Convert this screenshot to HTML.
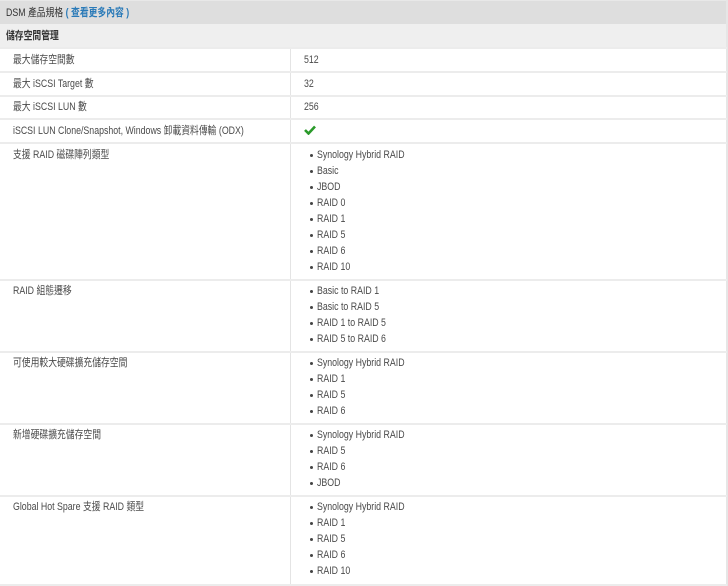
<!DOCTYPE html>
<html><head><meta charset="utf-8"><style>
*{margin:0;padding:0;box-sizing:border-box}
body{width:728px;height:586px;background:#fff;font-family:"Liberation Sans","Noto Sans CJK TC",sans-serif;font-size:11px;color:#4a4a4a;position:relative;overflow:hidden}
.a{position:absolute}
.hd{left:0;top:0;width:727px;height:24px;background:#dedede;border-top:1px solid #e8e8e8}
.sec{left:0;top:24px;width:727px;height:23px;background:#efefef}
.ln{position:absolute;left:0;width:727px;height:2px;background:#ececec}
.vl{position:absolute;left:290px;width:1px;background:#e4e4e4}
.t,.li{position:absolute;white-space:nowrap;line-height:14px;transform:scaleX(0.8);transform-origin:0 0}
.li{left:317px}
.d{position:absolute;left:310px;width:3px;height:3px;border-radius:50%;background:#444}
.rb{position:absolute;left:726px;top:0;width:2px;height:586px;background:#e6e6e6}
</style></head><body>
<div class="a hd"></div>
<div class="t" style="left:6px;top:6px;color:#333">DSM 產品規格 <b style="color:#2a7ab8">( 查看更多內容 )</b></div>
<div class="a sec"></div>
<div class="t" style="left:6px;top:29px;color:#333;font-weight:bold">儲存空間管理</div>
<div class="rb"></div>
<div class="vl" style="top:48px;height:537px"></div>
<div class="ln" style="top:47px"></div>
<div class="ln" style="top:71px"></div>
<div class="ln" style="top:95px"></div>
<div class="ln" style="top:118px"></div>
<div class="ln" style="top:142px"></div>
<div class="ln" style="top:279px"></div>
<div class="ln" style="top:351px"></div>
<div class="ln" style="top:423px"></div>
<div class="ln" style="top:495px"></div>
<div class="ln" style="top:584px"></div>

<div class="t" style="left:13px;top:53px">最大儲存空間數</div><div class="t" style="left:304px;top:53px">512</div>
<div class="t" style="left:13px;top:77px">最大 iSCSI Target 數</div><div class="t" style="left:304px;top:77px">32</div>
<div class="t" style="left:13px;top:100px">最大 iSCSI LUN 數</div><div class="t" style="left:304px;top:100px">256</div>
<div class="t" style="left:13px;top:124px">iSCSI LUN Clone/Snapshot, Windows 卸載資料傳輸 (ODX)</div>
<svg class="a" style="left:304px;top:125px" width="12" height="10" viewBox="0 0 12 10"><path d="M1 5 L4.5 8.5 L11 1.5" stroke="#2a9a2a" stroke-width="2.6" fill="none"/></svg>

<div class="t" style="left:13px;top:148px">支援 RAID 磁碟陣列類型</div>
<div class="d" style="top:154px"></div><div class="li" style="top:148px">Synology Hybrid RAID</div>
<div class="d" style="top:170px"></div><div class="li" style="top:164px">Basic</div>
<div class="d" style="top:186px"></div><div class="li" style="top:180px">JBOD</div>
<div class="d" style="top:202px"></div><div class="li" style="top:196px">RAID 0</div>
<div class="d" style="top:218px"></div><div class="li" style="top:212px">RAID 1</div>
<div class="d" style="top:234px"></div><div class="li" style="top:228px">RAID 5</div>
<div class="d" style="top:250px"></div><div class="li" style="top:244px">RAID 6</div>
<div class="d" style="top:266px"></div><div class="li" style="top:260px">RAID 10</div>

<div class="t" style="left:13px;top:284px">RAID 組態遷移</div>
<div class="d" style="top:290px"></div><div class="li" style="top:284px">Basic to RAID 1</div>
<div class="d" style="top:306px"></div><div class="li" style="top:300px">Basic to RAID 5</div>
<div class="d" style="top:322px"></div><div class="li" style="top:316px">RAID 1 to RAID 5</div>
<div class="d" style="top:338px"></div><div class="li" style="top:332px">RAID 5 to RAID 6</div>

<div class="t" style="left:13px;top:356px">可使用較大硬碟擴充儲存空間</div>
<div class="d" style="top:362px"></div><div class="li" style="top:356px">Synology Hybrid RAID</div>
<div class="d" style="top:378px"></div><div class="li" style="top:372px">RAID 1</div>
<div class="d" style="top:394px"></div><div class="li" style="top:388px">RAID 5</div>
<div class="d" style="top:410px"></div><div class="li" style="top:404px">RAID 6</div>

<div class="t" style="left:13px;top:428px">新增硬碟擴充儲存空間</div>
<div class="d" style="top:434px"></div><div class="li" style="top:428px">Synology Hybrid RAID</div>
<div class="d" style="top:450px"></div><div class="li" style="top:444px">RAID 5</div>
<div class="d" style="top:466px"></div><div class="li" style="top:460px">RAID 6</div>
<div class="d" style="top:482px"></div><div class="li" style="top:476px">JBOD</div>

<div class="t" style="left:13px;top:500px">Global Hot Spare 支援 RAID 類型</div>
<div class="d" style="top:506px"></div><div class="li" style="top:500px">Synology Hybrid RAID</div>
<div class="d" style="top:522px"></div><div class="li" style="top:516px">RAID 1</div>
<div class="d" style="top:538px"></div><div class="li" style="top:532px">RAID 5</div>
<div class="d" style="top:554px"></div><div class="li" style="top:548px">RAID 6</div>
<div class="d" style="top:570px"></div><div class="li" style="top:564px">RAID 10</div>
</body></html>
